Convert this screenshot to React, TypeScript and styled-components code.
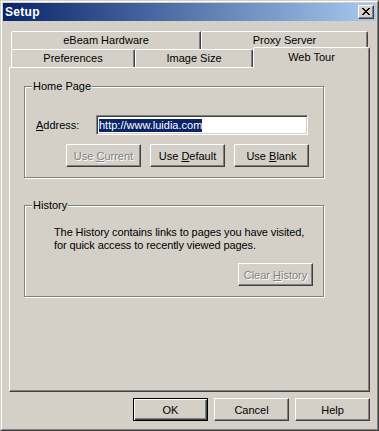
import styled, { createGlobalStyle } from "styled-components";

const GlobalStyle = createGlobalStyle`
  html, body {
    margin: 0;
    padding: 0;
    background: #d4d0c8;
  }
  body {
    font-family: "Liberation Sans", Arial, sans-serif;
    font-size: 11px;
    color: #000000;
  }
`;

const Window = styled.div`
  box-sizing: border-box;
  width: 379px;
  height: 431px;
  background: #d4d0c8;
  border-style: solid;
  border-width: 1px;
  border-color: #d4d0c8 #404040 #404040 #d4d0c8;
  display: flex;
  flex-direction: column;
`;

const InnerFrame = styled.div`
  flex: 1;
  border-style: solid;
  border-width: 1px;
  border-color: #ffffff #808080 #808080 #ffffff;
  padding: 1px;
  display: flex;
  flex-direction: column;
`;

const TitleBar = styled.div`
  height: 18px;
  display: flex;
  align-items: center;
  justify-content: space-between;
  padding: 0 2px;
  background: linear-gradient(to right, #0a246a, #a6caf0);
`;

const Title = styled.span`
  color: #ffffff;
  font-weight: bold;
  font-size: 12px;
  letter-spacing: 0.3px;
`;

const CloseButton = styled.div`
  box-sizing: border-box;
  width: 16px;
  height: 14px;
  background: #d4d0c8;
  border-style: solid;
  border-width: 1px;
  border-color: #ffffff #404040 #404040 #ffffff;
  box-shadow: inset -1px -1px 0 #808080;
  display: flex;
  align-items: center;
  justify-content: center;
  padding: 0 1px 1px 0;
`;

const Body = styled.div`
  padding: 10px 6px 0 6px;
  display: flex;
  flex-direction: column;
`;

const TabRow = styled.div`
  display: flex;
  align-items: flex-end;
  height: 18px;
  padding-left: 2px;
`;

const Tab = styled.div<{ $w: number; $active?: boolean }>`
  box-sizing: border-box;
  width: ${(p) => p.$w}px;
  height: ${(p) => (p.$active ? 21 : 18)}px;
  margin-bottom: ${(p) => (p.$active ? -1 : 0)}px;
  position: relative;
  z-index: ${(p) => (p.$active ? 2 : 1)};
  background: #d4d0c8;
  border-style: solid;
  border-width: 1px 1px 0 1px;
  border-color: #ffffff #404040 transparent #ffffff;
  border-radius: 2px 2px 0 0;
  box-shadow: inset -1px 0 0 #808080;
  display: flex;
  align-items: ${(p) => (p.$active ? "flex-start" : "center")};
  padding-top: ${(p) => (p.$active ? 3 : 0)}px;
  justify-content: center;
  font-size: 11px;
  line-height: 13px;
`;

const Panel = styled.div`
  box-sizing: border-box;
  width: 361px;
  height: 325px;
  border-style: solid;
  border-width: 1px;
  border-color: #ffffff #404040 #404040 #ffffff;
  box-shadow: inset -1px -1px 0 #808080;
  padding: 18px 0 0 14px;
  display: flex;
  flex-direction: column;
`;

const Group = styled.div<{ $gap?: number }>`
  position: relative;
  box-sizing: border-box;
  width: 300px;
  height: 92px;
  margin-top: ${(p) => p.$gap ?? 0}px;
  border: 1px solid #808080;
  box-shadow: inset 1px 1px 0 #ffffff, 1px 1px 0 #ffffff;
  display: flex;
  flex-direction: column;
`;

const Legend = styled.span`
  position: absolute;
  top: -7px;
  left: 7px;
  padding: 0 1px;
  background: #d4d0c8;
  font-size: 11px;
  line-height: 13px;
`;

const FieldRow = styled.div`
  display: flex;
  align-items: center;
  margin: 28px 0 0 11px;
`;

const Label = styled.span`
  width: 60px;
  font-size: 11px;
`;

const AddressInput = styled.div`
  box-sizing: border-box;
  width: 212px;
  height: 20px;
  background: #ffffff;
  border-style: solid;
  border-width: 1px;
  border-color: #808080 #ffffff #ffffff #808080;
  box-shadow: inset 1px 1px 0 #404040, inset -1px -1px 0 #d4d0c8;
  display: flex;
  align-items: center;
  padding-left: 2px;
`;

const Selection = styled.span`
  background: #0a246a;
  color: #ffffff;
  font-size: 11px;
  line-height: 13px;
`;

const ButtonRow = styled.div<{ $top: number; $left?: number; $end?: boolean }>`
  display: flex;
  gap: 9px;
  margin-top: ${(p) => p.$top}px;
  margin-left: ${(p) => p.$left ?? 0}px;
  justify-content: ${(p) => (p.$end ? "flex-end" : "flex-start")};
  padding-right: ${(p) => (p.$end ? 10 : 0)}px;
`;

const Button = styled.div<{ $disabled?: boolean; $default?: boolean }>`
  box-sizing: border-box;
  width: 75px;
  height: 23px;
  background: #d4d0c8;
  display: flex;
  align-items: center;
  justify-content: center;
  font-size: 11px;
  color: ${(p) => (p.$disabled ? "#808080" : "#000000")};
  text-shadow: ${(p) => (p.$disabled ? "1px 1px 0 #ffffff" : "none")};
  border-style: solid;
  border-width: 1px;
  border-color: ${(p) =>
    p.$default ? "#000000" : "#ffffff #404040 #404040 #ffffff"};
  box-shadow: ${(p) =>
    p.$default
      ? "inset 1px 1px 0 #ffffff, inset -1px -1px 0 #404040, inset -2px -2px 0 #808080"
      : "inset -1px -1px 0 #808080"};
`;

const Description = styled.p`
  margin: 20px 0 0 29px;
  font-size: 11px;
  line-height: 13px;
  letter-spacing: -0.1px;
`;

const Footer = styled.div`
  display: flex;
  justify-content: flex-end;
  gap: 6px;
  margin-top: 6px;
`;

const CloseGlyph = () => (
  <svg width="8" height="7" viewBox="0 0 8 7" shapeRendering="crispEdges">
    <path
      fill="#000"
      d="M0 0h2v1H0zM6 0h2v1H6zM1 1h2v1H1zM5 1h2v1H5zM2 2h4v1H2zM3 3h2v1H3zM2 4h4v1H2zM1 5h2v1H1zM5 5h2v1H5zM0 6h2v1H0zM6 6h2v1H6z"
    />
  </svg>
);

export default function App() {
  return (
    <>
      <GlobalStyle />
      <Window>
        <InnerFrame>
          <TitleBar>
            <Title>Setup</Title>
            <CloseButton>
              <CloseGlyph />
            </CloseButton>
          </TitleBar>
          <Body>
            <TabRow>
              <Tab $w={190}>eBeam Hardware</Tab>
              <Tab $w={167}>Proxy Server</Tab>
            </TabRow>
            <TabRow>
              <Tab $w={124}>Preferences</Tab>
              <Tab $w={118}>Image Size</Tab>
              <Tab $w={117} $active>
                Web Tour
              </Tab>
            </TabRow>
            <Panel>
              <Group>
                <Legend>Home Page</Legend>
                <FieldRow>
                  <Label>
                    <u>A</u>ddress:
                  </Label>
                  <AddressInput>
                    <Selection>http://www.luidia.com</Selection>
                  </AddressInput>
                </FieldRow>
                <ButtonRow $top={9} $left={41}>
                  <Button $disabled>
                    Use&nbsp;<u>C</u>urrent
                  </Button>
                  <Button>
                    Use&nbsp;<u>D</u>efault
                  </Button>
                  <Button>
                    Use&nbsp;<u>B</u>lank
                  </Button>
                </ButtonRow>
              </Group>
              <Group $gap={27}>
                <Legend>History</Legend>
                <Description>
                  The History contains links to pages you have visited,
                  <br />
                  for quick access to recently viewed pages.
                </Description>
                <ButtonRow $top={11} $end>
                  <Button $disabled>
                    Clear&nbsp;<u>H</u>istory
                  </Button>
                </ButtonRow>
              </Group>
            </Panel>
            <Footer>
              <Button $default>OK</Button>
              <Button>Cancel</Button>
              <Button>Help</Button>
            </Footer>
          </Body>
        </InnerFrame>
      </Window>
    </>
  );
}
